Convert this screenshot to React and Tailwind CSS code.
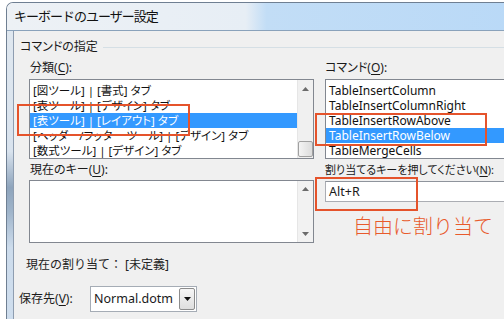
import React from 'react';

const ui = "font-['Noto_Sans','Noto_Sans_CJK_JP',sans-serif] [font-feature-settings:'palt']";

const categories = [
    '[図ツール] | [書式] タブ',
    '[表ツール] | [デザイン] タブ',
    '[表ツール] | [レイアウト] タブ',
    '[ヘッダー/フッター ツール] | [デザイン] タブ',
    '[数式ツール] | [デザイン] タブ',
];

const commands = [
    'TableInsertColumn',
    'TableInsertColumnRight',
    'TableInsertRowAbove',
    'TableInsertRowBelow',
    'TableMergeCells',
];

const Arrow = ({ down }) => (
    <svg width="7" height="4" viewBox="0 0 7 4" className="block">
        {down ? <path d="M0 0h7L3.5 4z" fill="#6b6b6b" /> : <path d="M0 4h7L3.5 0z" fill="#6b6b6b" />}
    </svg>
);

const Mnemonic = ({ text, letter }) => (
    <span>
        {text}(<span className="underline underline-offset-2">{letter}</span>):
    </span>
);

const ListBox = ({ items, selected, height, scroll }) => (
    <div className={`flex border border-[#828790] bg-white ${height}`}>
        <div className="flex-1 pt-[3px] overflow-hidden">
            {items.map((item, i) => (
                <div
                    key={item}
                    className={`h-[15px] leading-[15px] pl-[3px] whitespace-nowrap text-[11.5px] ${
                        i === selected ? 'bg-[#3399ff] text-white' : 'text-[#111]'
                    }`}
                >
                    {item}
                </div>
            ))}
        </div>
        {scroll}
    </div>
);

export default function App() {
    return (
        <div className={`relative w-[504px] h-[319px] overflow-hidden bg-white text-[#1a1a1a] ${ui}`}>
            <div className="ml-[6px] mt-[2px] h-[330px] w-[520px] flex flex-col border-l border-t border-[#6f7f92] rounded-tl-[7px] overflow-hidden">
                {/* title bar */}
                <div className="h-[28px] shrink-0 flex items-center pl-[7px] bg-[linear-gradient(to_right,#edf1f5_0%,#e7eef5_46%,#c2ddf6_50%,#b9d9f7_100%)] border-b border-[#8aa2bb]">
                    <span className="text-[13px] [font-feature-settings:normal] tracking-[-1px] text-[#111]">キーボードのユーザー設定</span>
                </div>

                <div className="flex flex-1 min-w-0">
                    <div className="w-[6px] shrink-0 bg-[linear-gradient(to_bottom,#dfe7ef_0%,#d9e3ee_40%,#8ea4bc_52%,#9fb4ca_60%,#cddcec_72%,#cfdeee_100%)]" />
                    <div className="flex-1 min-w-0 bg-[#f0f0f0] border-l border-[#8e9db0] flex flex-col">
                        {/* group header */}
                        <div className="mt-[9px] h-[14px] flex items-center pl-[6px]">
                            <span className="text-[12px] leading-[14px]">コマンドの指定</span>
                            <div className="flex-1 h-px bg-[#d5dfe5] ml-[5px]" />
                        </div>

                        {/* columns */}
                        <div className="flex pl-[15px] mt-[6px]">
                            <div className="w-[285px] shrink-0 flex flex-col">
                                <div className="h-[16px] leading-[16px] text-[12px] pl-px mb-[3px]">
                                    <Mnemonic text="分類" letter="C" />
                                </div>
                                <ListBox
                                    items={categories}
                                    selected={2}
                                    height="h-[80px]"
                                    scroll={
                                        <div className="w-[16px] shrink-0 bg-[#f0f0f0] border-l border-[#e6e6e6] flex flex-col items-center">
                                            <div className="h-[17px] flex items-center justify-center">
                                                <Arrow />
                                            </div>
                                            <div className="flex-1" />
                                            <div className="w-[15px] h-[16px] mb-px rounded-[2px] border border-[#a0a0a0] bg-[linear-gradient(to_right,#f4f4f4,#dcdcdc)]" />
                                        </div>
                                    }
                                />
                                <div className="h-[16px] leading-[16px] text-[12px] pl-px mt-[3px] mb-[2px]">
                                    <Mnemonic text="現在のキー" letter="U" />
                                </div>
                                <ListBox
                                    items={[]}
                                    height="h-[63px]"
                                    scroll={
                                        <div className="w-[16px] shrink-0 bg-[#f2f2f2] border-l border-[#e6e6e6] flex flex-col items-center justify-between py-[6px]">
                                            <Arrow />
                                            <Arrow down />
                                        </div>
                                    }
                                />
                            </div>

                            <div className="ml-[11px] w-[260px] shrink-0 flex flex-col">
                                <div className="h-[16px] leading-[16px] text-[12px] mb-[3px]">
                                    <Mnemonic text="コマンド" letter="O" />
                                </div>
                                <div className="h-[80px] border border-[#828790] bg-white pt-[3px] overflow-hidden">
                                    {commands.map((c, i) => (
                                        <div
                                            key={c}
                                            className={`h-[15px] leading-[15px] pl-[3px] text-[12px] ${
                                                i === 3 ? 'bg-[#3399ff] text-white' : 'text-[#111]'
                                            }`}
                                        >
                                            {c}
                                        </div>
                                    ))}
                                </div>
                                <div className="h-[16px] leading-[16px] text-[11px] mt-[3px] whitespace-nowrap">
                                    割り当てるキーを押してください(<span className="underline underline-offset-2">N</span>):
                                </div>
                                <div className="mt-[3px] h-[21px] border border-[#abadb3] border-t-[#8f949c] bg-white pl-[3px] text-[12.5px] leading-[19px]">
                                    Alt+R
                                </div>
                            </div>
                        </div>

                        <div className="mt-[14px] h-[16px] leading-[16px] pl-[12px] text-[12px] text-[#222] [font-feature-settings:normal]">
                            現在の割り当て： [未定義]
                        </div>

                        <div className="mt-[13px] flex items-center pl-[5px]">
                            <span className="text-[12px] w-[71px] shrink-0">
                                <Mnemonic text="保存先" letter="V" />
                            </span>
                            <div className="w-[107px] shrink-0 h-[26px] border border-[#a5acb5] bg-white flex items-center justify-between pl-[3px] pr-px">
                                <span className="text-[12.5px]">Normal.dotm</span>
                                <div className="w-[16px] h-[22px] border border-[#8c8c8c] rounded-[2px] bg-[linear-gradient(to_bottom,#f6f6f6,#dedede)] flex items-center justify-center">
                                    <svg width="7" height="4" viewBox="0 0 7 4">
                                        <path d="M0 0h7L3.5 4z" fill="#111" />
                                    </svg>
                                </div>
                            </div>
                        </div>
                    </div>
                </div>
            </div>

            {/* annotations */}
            <div className="absolute left-[17px] top-[104px] w-[173px] h-[32px] border-2 border-[#e5532b]" />
            <div className="absolute left-[315px] top-[113px] w-[172px] h-[33px] border-2 border-[#e5532b]" />
            <div className="absolute left-[315px] top-[177px] w-[103px] h-[34px] border-2 border-[#e5532b]" />
            <div className="absolute left-[353px] top-[214px] text-[20px] leading-[26px] font-light text-[#e85a2c] [font-feature-settings:normal] whitespace-nowrap">
                自由に割り当て
            </div>
        </div>
    );
}
